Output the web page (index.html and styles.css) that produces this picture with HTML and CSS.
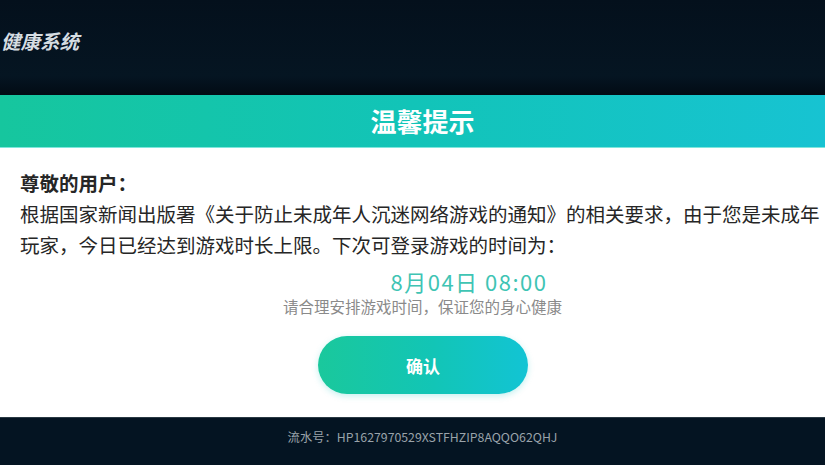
FILE: index.html
```html
<!DOCTYPE html>
<html lang="zh-CN">
  <head>
    <meta charset="UTF-8" />
    <meta name="viewport" content="width=device-width, initial-scale=1.0" />
    <title>温馨提示</title>
    <link rel="stylesheet" href="styles.css">
  </head>
  <body>
    <div class="topbar">
      <h1 class="brand">健康系统</h1>
    </div>
    <div class="notice">
      <div class="notice-head">温馨提示</div>
      <div class="notice-body">
        <p class="greet">尊敬的用户：</p>
        <p class="text">根据国家新闻出版署《关于防止未成年人沉迷网络游戏的通知》的相关要求，由于您是未成年<br>玩家，今日已经达到游戏时长上限。下次可登录游戏的时间为：</p>
        <div class="next-time">8月04日 08:00</div>
        <div class="tip">请合理安排游戏时间，保证您的身心健康</div>
        <button class="confirm">确认</button>
      </div>
    </div>
    <div class="footer">流水号：HP1627970529XSTFHZIP8AQQO62QHJ</div>
  </body>
</html>
```

FILE: styles.css
```css
* {
  box-sizing: border-box;
}

body {
  margin: 0;
  height: 465px;
  overflow: hidden;
  background: #031321;
  font-family: "Noto Sans CJK SC", "Noto Sans", sans-serif;
}

.topbar {
  height: 95px;
  padding: 29px 0 0 1px;
  background: linear-gradient(180deg, #04101c 0%, #051522 80%, #020b14 100%);
}

.brand {
  margin: 0;
  font-size: 19.5px;
  line-height: 24px;
  font-weight: 700;
  font-style: italic;
  color: #d6dde2;
}

.notice-head {
  height: 53px;
  padding-left: 20px;
  line-height: 52px;
  text-align: center;
  font-size: 26px;
  font-weight: 700;
  color: #fff;
  background: linear-gradient(90deg, #16c69e 0%, #12c4b8 50%, #17c3d2 100%);
  border-bottom: 1px solid #7fe6dc;
}

.notice-body {
  height: 269px;
  padding: 19px 0 0 20px;
  background: #fff;
  color: #262626;
  text-align: center;
}

.notice-body p {
  margin: 0;
  text-align: left;
  font-size: 19.5px;
  line-height: 31px;
  white-space: nowrap;
}

.greet {
  font-weight: 700;
}

.next-time {
  margin-top: 7px;
  padding-left: 93px;
  font-size: 22px;
  line-height: 28px;
  letter-spacing: 1.5px;
  color: #3fc4b4;
}

.tip {
  font-size: 15.5px;
  line-height: 22px;
  color: #8a8a8a;
}

.confirm {
  display: block;
  width: 210px;
  height: 58px;
  margin: 19px 0 0 298px;
  border: none;
  border-radius: 29px;
  background: linear-gradient(90deg, #1ac89c 0%, #12c5b6 55%, #12c4d4 100%);
  box-shadow: 0 2px 6px rgba(20, 196, 190, 0.25);
  color: #fff;
  font-family: inherit;
  font-size: 17px;
  font-weight: 700;
  cursor: pointer;
}

.footer {
  height: 48px;
  padding: 9px 0 0 20px;
  text-align: center;
  font-size: 12.3px;
  line-height: 20px;
  color: #9aa3aa;
  background: #041422;
  border-top: 1px solid #2a3a44;
}
```
